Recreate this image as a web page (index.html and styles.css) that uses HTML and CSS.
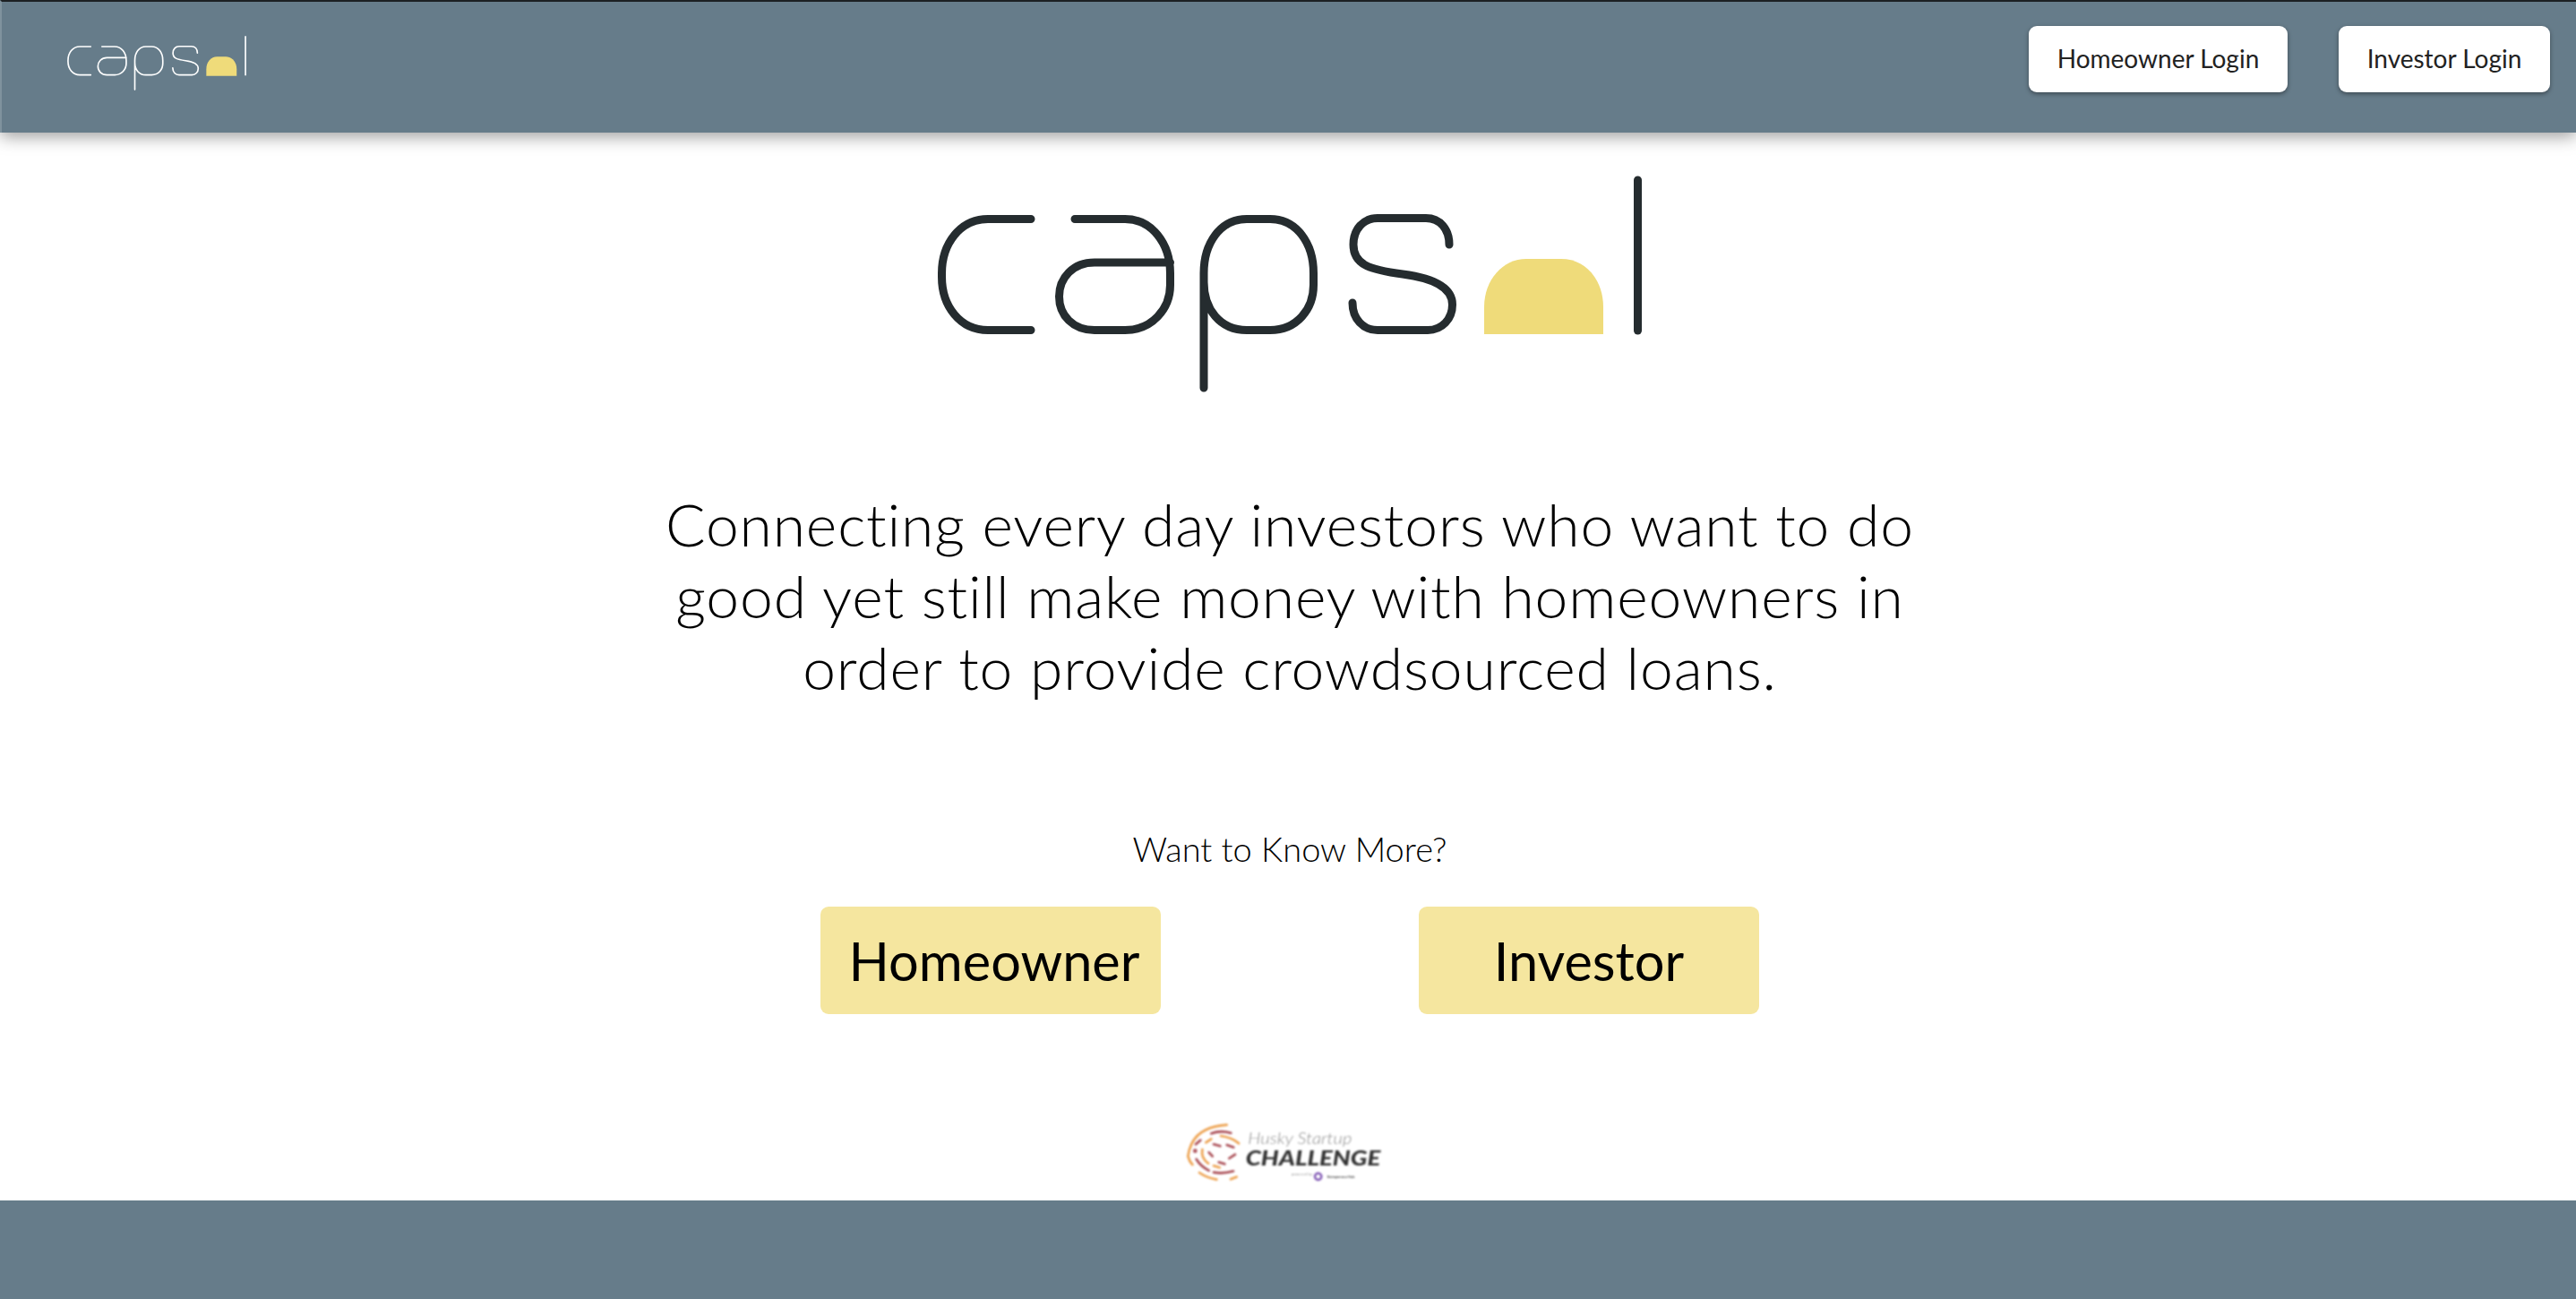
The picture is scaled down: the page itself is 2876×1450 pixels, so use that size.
FILE: index.html
```html
<!DOCTYPE html>
<html lang="en">
<head>
<meta charset="utf-8">
<title>Capsol</title>
<link rel="stylesheet" href="styles.css">
</head>
<body>
<svg class="defs" width="0" height="0" aria-hidden="true">
  <symbol id="capsol" viewBox="1040 190 800 250">
    <g class="logo-lines">
      <path d="M1151 244.5H1103C1072 244.5 1051.5 272 1051.5 305V309C1051.5 342 1072 368.5 1103 368.5H1151"/>
      <path d="M1200 244.5H1256C1286 244.5 1306.5 272 1306.5 305V318C1306.5 345 1286 368.5 1256 368.5H1222C1198 368.5 1182.5 352 1182.5 331C1182.5 310 1198 293 1222 293H1306.5"/>
      <path d="M1344 433V305C1344 272 1362 244.5 1392 244.5H1418C1448 244.5 1466.5 272 1466.5 305V318C1466.5 345 1448 368.5 1418 368.5H1392C1362 368.5 1344 345 1344 315"/>
      <path d="M1618 273C1618 256 1608 243.5 1592 243.5H1538C1522 243.5 1511 256 1511 273C1511 295 1528 301 1566 306C1604 311 1621.5 322 1621.5 340C1621.5 356 1610 368.5 1594 368.5H1538C1522 368.5 1510 356 1510 338"/>
      <path d="M1828.5 201V369"/>
    </g>
    <path class="logo-dome" d="M1657 373V343C1657 312 1678 289 1704 289H1743C1770 289 1790 312 1790 343V373Z"/>
  </symbol>
</svg>

<header class="topbar">
  <svg class="logo-small"><use href="#capsol"/></svg>
  <nav class="logins">
    <a class="login login-home">Homeowner Login</a>
    <a class="login login-inv">Investor Login</a>
  </nav>
</header>

<main class="hero">
  <svg class="logo-large"><use href="#capsol"/></svg>
  <p class="tagline">Connecting every day investors who want to do<br>good yet still make money with homeowners in<br>order to provide crowdsourced loans.</p>
  <p class="more">Want to Know More?</p>
  <div class="cta-row">
    <a class="cta cta-home">Homeowner</a>
    <a class="cta">Investor</a>
  </div>
  <svg class="husky" viewBox="0 0 780 300">
    <g class="h-orange">
      <path d="M212 53Q95 60 82 158Q86 175 97 186"/>
      <path d="M192 90Q230 95 252 115"/>
      <path d="M120 213Q145 230 178 236"/>
      <path d="M225 235L245 227"/>
      <path d="M130 135Q125 165 150 182"/>
      <path d="M142 112L160 100"/>
      <path d="M168 190L188 196"/>
    </g>
    <g class="h-red">
      <path d="M160 82Q190 70 226 80"/>
      <path d="M110 168Q125 192 152 206"/>
      <path d="M168 212Q200 218 234 208"/>
      <path d="M108 118L124 104"/>
      <path d="M152 145L164 158"/>
      <path d="M168 118L190 124"/>
      <path d="M212 120L235 128"/>
      <path d="M220 165L240 152"/>
      <path d="M185 178L205 184"/>
      <circle cx="106" cy="140" r="3"/>
    </g>
    <text class="h-husky" x="283" y="118" textLength="348" lengthAdjust="spacingAndGlyphs">Husky Startup</text>
    <text class="h-chall" x="275" y="190" textLength="452" lengthAdjust="spacingAndGlyphs">CHALLENGE</text>
    <text class="h-small" x="428" y="222" textLength="70" lengthAdjust="spacingAndGlyphs">powered by</text>
    <circle class="h-ring" cx="518" cy="226" r="11"/>
    <text class="h-small h-dark" x="548" y="231" textLength="92" lengthAdjust="spacingAndGlyphs">Entrepreneur Hub</text>
  </svg>
</main>

<footer class="bottombar"></footer>
</body>
</html>
```

FILE: styles.css
```css
* { box-sizing: border-box; }

html, body { margin: 0; height: 100%; }

body {
  width: 2876px;
  height: 1450px;
  display: flex;
  flex-direction: column;
  overflow: hidden;
  background: #fff;
  font-family: "Lato", "Noto Sans", sans-serif;
  font-variant-ligatures: none;
  color: #000;
}

.defs { display: block; height: 0; }

.logo-lines { fill: none; stroke-linecap: round; stroke-linejoin: round; }
.logo-dome { fill: #efdb7a; stroke: none; }

.topbar {
  flex: none;
  height: 148px;
  border-top: 2px solid #1c2023;
  border-left: 2px solid #7f929e;
  background: #667c8a;
  box-shadow: 0 4px 18px rgba(0, 0, 0, 0.4);
  display: flex;
  justify-content: space-between;
  align-items: flex-start;
  padding: 36px 29px 0 71px;
  position: relative;
}

.logo-small {
  width: 204px;
  height: 64px;
  stroke: #fff;
  stroke-width: 6.5px;
}

.logins { display: flex; gap: 57px; margin-top: -9px; }

.login {
  height: 74px;
  display: flex;
  align-items: center;
  justify-content: center;
  padding-bottom: 2px;
  background: #fff;
  border-radius: 9px;
  color: #222;
  font-size: 28px;
  box-shadow: 0 2px 5px rgba(0, 0, 0, 0.4);
}
.login-home { width: 289px; }
.login-inv { width: 236px; }

.hero {
  flex: 1;
  display: flex;
  flex-direction: column;
  align-items: center;
  min-height: 0;
  padding-left: 4px;
}

.logo-large {
  width: 800px;
  height: 250px;
  margin-top: 42px;
  stroke: #252c2f;
  stroke-width: 9px;
}

.tagline {
  margin: 105px 0 0;
  font-size: 66px;
  font-weight: 300;
  letter-spacing: 0.85px;
  line-height: 80px;
  text-align: center;
  color: #000;
}

.more {
  margin: 138px 0 0;
  font-size: 38px;
  font-weight: 300;
  line-height: 48px;
  color: #000;
}

.cta-row { display: flex; gap: 288px; margin-top: 41px; }

.cta {
  width: 380px;
  height: 120px;
  display: flex;
  align-items: center;
  justify-content: center;
  background: #f5e69f;
  border-radius: 9px;
  font-size: 59.5px;
}
.cta-home { padding-left: 8px; white-space: nowrap; }

.husky {
  width: 260px;
  height: 100px;
  margin-top: 106px;
  margin-right: 22px;
  filter: blur(0.8px);
}

.h-orange, .h-red { fill: none; stroke-linecap: round; stroke-width: 8; }
.h-orange { stroke: #eda14e; }
.h-red { stroke: #a94a52; }

.h-husky {
  font-size: 50px;
  font-style: italic;
  font-weight: 300;
  fill: #8d8d8d;
}
.h-chall {
  font-size: 70px;
  font-style: italic;
  font-weight: 900;
  fill: #333;
}
.h-small { font-size: 13px; fill: #999; }
.h-dark { fill: #444; font-weight: 700; }
.h-ring { fill: #fff; stroke: #7a4fb0; stroke-width: 7; }

.bottombar {
  flex: none;
  height: 110px;
  background: #667c8a;
}
```
